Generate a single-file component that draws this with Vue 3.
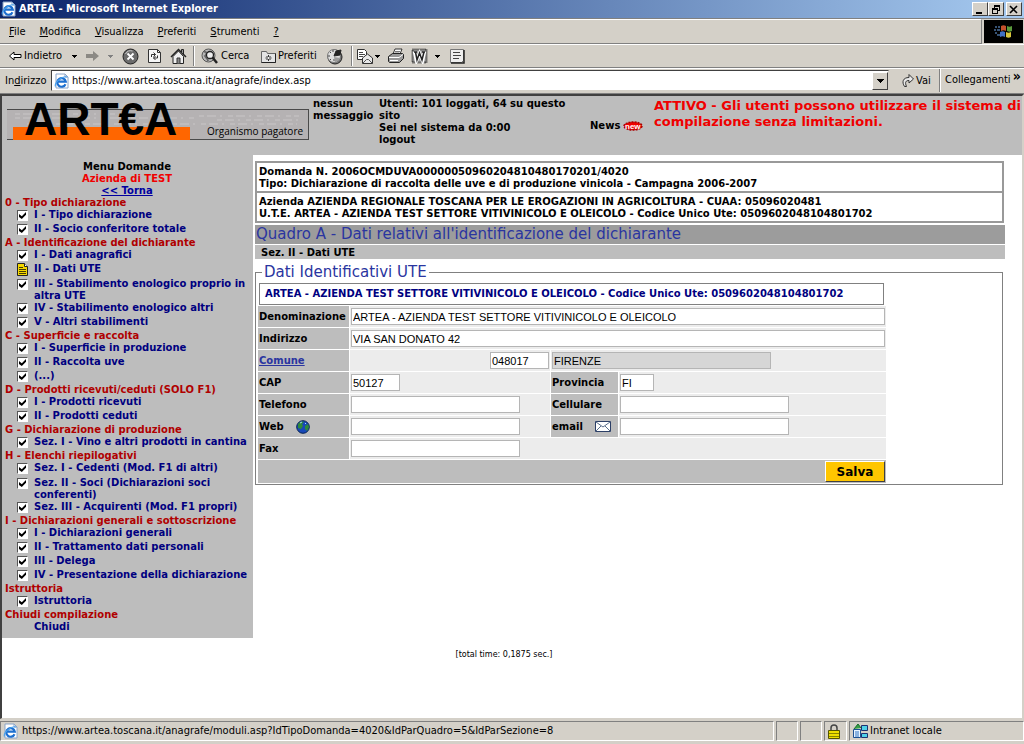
<script setup>
import { reactive } from 'vue'

const menus = [
  { key: 'F', rest: 'ile' },
  { key: 'M', rest: 'odifica' },
  { key: 'V', rest: 'isualizza' },
  { key: 'P', rest: 'referiti' },
  { key: 'S', rest: 'trumenti' },
  { key: '?', rest: '' }
]

const sections = reactive([
  { title: '0 - Tipo dichiarazione', items: [
    { text: 'I - Tipo dichiarazione', done: true },
    { text: 'II - Socio conferitore totale', done: true }
  ] },
  { title: 'A - Identificazione del dichiarante', items: [
    { text: 'I - Dati anagrafici', done: true },
    { text: 'II - Dati UTE', current: true },
    { text: 'III - Stabilimento enologico proprio in', more: 'altra UTE', done: true },
    { text: 'IV - Stabilimento enologico altri', done: true },
    { text: 'V - Altri stabilimenti', done: true }
  ] },
  { title: 'C - Superficie e raccolta', items: [
    { text: 'I - Superficie in produzione', done: true },
    { text: 'II - Raccolta uve', done: true },
    { text: '(...)', done: true }
  ] },
  { title: 'D - Prodotti ricevuti/ceduti (SOLO F1)', items: [
    { text: 'I - Prodotti ricevuti', done: true },
    { text: 'II - Prodotti ceduti', done: true }
  ] },
  { title: 'G - Dichiarazione di produzione', items: [
    { text: 'Sez. I - Vino e altri prodotti in cantina', done: true }
  ] },
  { title: 'H - Elenchi riepilogativi', items: [
    { text: 'Sez. I - Cedenti (Mod. F1 di altri)', done: true },
    { text: 'Sez. II - Soci (Dichiarazioni soci', more: 'conferenti)', done: true },
    { text: 'Sez. III - Acquirenti (Mod. F1 propri)', done: true }
  ] },
  { title: 'I - Dichiarazioni generali e sottoscrizione', items: [
    { text: 'I - Dichiarazioni generali', done: true },
    { text: 'II - Trattamento dati personali', done: true },
    { text: 'III - Delega', done: true },
    { text: 'IV - Presentazione della dichiarazione', done: true }
  ] },
  { title: 'Istruttoria', items: [{ text: 'Istruttoria', done: true }] },
  { title: 'Chiudi compilazione', items: [{ text: 'Chiudi', link: true }] }
])

const form = reactive({
  url: 'https://www.artea.toscana.it/anagrafe/index.asp',
  denominazione: 'ARTEA - AZIENDA TEST SETTORE VITIVINICOLO E OLEICOLO',
  indirizzo: 'VIA SAN DONATO 42',
  codice: '048017',
  comune: 'FIRENZE',
  cap: '50127',
  provincia: 'FI',
  telefono: '',
  cellulare: '',
  web: '',
  email: '',
  fax: ''
})
</script>

<template>
  <div class="window">
    <svg class="defs" width="0" height="0" aria-hidden="true">
      <symbol id="ie" viewBox="0 0 16 16">
        <path d="M2 1h9l3 3v11H2z" fill="#fff" stroke="#8aa4c8" />
        <path d="M11 1v3h3" fill="none" stroke="#8aa4c8" />
        <path d="M11.500 11.200A4.300 4.300 0 1 1 11.800 8.600H4" fill="none" stroke="#1c6fd0" stroke-width="2.200" />
        <path d="M1.500 13.500C0 10 8 2.500 13 4" fill="none" stroke="#4aa3ee" stroke-width="1.200" />
      </symbol>
      <symbol id="caret" viewBox="0 0 5 3"><path d="M0 0h5v1H4v1H3v1H2V2H1V1H0z" fill="currentColor" /></symbol>
    </svg>

    <header class="titlebar">
      <svg class="i16"><use href="#ie" /></svg>
      <span class="title">ARTEA - Microsoft Internet Explorer</span>
      <button class="winbtn" aria-label="Riduci a icona"><svg width="10" height="9"><path d="M1 7h6v2H1z" /></svg></button>
      <button class="winbtn" aria-label="Ripristina"><svg width="10" height="9"><path d="M3 0h6v6H7V5h1V2H4v1H3zM1 3h6v6H1zM2 5v3h4V5z" fill-rule="evenodd" /></svg></button>
      <button class="winbtn close" aria-label="Chiudi finestra"><svg width="10" height="9"><path d="M1 1l7 7M8 1L1 8" stroke="#000" stroke-width="1.600" /></svg></button>
    </header>

    <div class="menurow">
      <nav class="menubar">
        <button v-for="m in menus" :key="m.key"><u>{{ m.key }}</u>{{ m.rest }}</button>
      </nav>
      <div class="throbber">
        <svg width="20" height="18" viewBox="0 0 20 18">
          <path d="M7 3c2-1 3-1 5 0v5c-2-1-3-1-5 0z" fill="#c4502c" />
          <path d="M13 3c2 1 3 1 5 0v5c-2 1-3 1-5 0z" fill="#5b9a3c" />
          <path d="M6 9c2-1 3-1 5 0v5c-2-1-3-1-5 0z" fill="#3f6fc4" />
          <path d="M12 9c2 1 3 1 5 0v5c-2 1-3 1-5 0z" fill="#d8c53c" />
          <path d="M1 4h2M4 4h2M0 7h2M3 7h3M1 10h2M3 12h3" stroke="#4a6f9c" stroke-width="1.500" />
        </svg>
      </div>
    </div>

    <div class="toolbar">
      <button class="tool"><svg width="14" height="10"><path d="M13 3.500H6V1L1.500 5 6 9V6.500h7z" fill="#fff" stroke="#000" /></svg><span>Indietro</span></button>
      <button class="tool" aria-label="Cronologia indietro"><svg width="5" height="3"><use href="#caret" /></svg></button>
      <button class="tool" aria-label="Avanti"><svg width="14" height="10"><path d="M0 3h7V0l6 5-6 5V7H0z" fill="#8b8984" /></svg></button>
      <button class="tool off" aria-label="Cronologia avanti"><svg width="5" height="3"><use href="#caret" /></svg></button>
      <button class="tool" aria-label="Termina">
        <svg width="17" height="17"><circle cx="8.500" cy="8.500" r="7.500" fill="#6b6b6b" stroke="#222" /><path d="M3.500 6a6 6 0 0 1 7-3" stroke="#ccc" fill="none" /><path d="M5.500 5.500l6 6M11.500 5.500l-6 6" stroke="#fff" stroke-width="1.800" /></svg>
      </button>
      <button class="tool" aria-label="Aggiorna">
        <svg width="15" height="16"><path d="M1.500 1.500h9l3 3v10h-12z" fill="#f6f6f6" stroke="#333" /><path d="M10.500 1.500v3h3" stroke="#333" fill="none" /><path d="M4.500 9V6.500h4M6.500 4.500l2 2-2 2M10.500 7.500V10h-4M8.500 8l-2 2 2 2" stroke="#333" fill="none" /></svg>
      </button>
      <button class="tool" aria-label="Pagina iniziale">
        <svg width="17" height="17"><path d="M3 8.500v7h10.500v-7L8.500 3z" fill="#eee" stroke="#222" /><path d="M1 9l7.500-7.500L16 9" fill="none" stroke="#222" stroke-width="1.500" /><path d="M11.500 4V1.500h2V6" fill="#999" stroke="#222" /><path d="M7 15.500V10h3v5.500" fill="#888" stroke="#333" /></svg>
      </button>
      <i class="sep"></i>
      <button class="tool">
        <svg width="18" height="17"><circle cx="7.500" cy="7.500" r="6.500" fill="#b8b8b8" stroke="#555" /><path d="M3 4c3-1 3 3 1 4 2 3 3 3 3 5" fill="none" stroke="#666" stroke-width="1.800" /><circle cx="9" cy="7" r="3.500" fill="#eee" stroke="#222" stroke-width="1.300" /><path d="M11.500 9.500l4.500 5.500" stroke="#222" stroke-width="2.500" /></svg><span>Cerca</span>
      </button>
      <button class="tool">
        <svg width="16" height="15"><path d="M1.500 2.500h5l1 2h8v9h-14z" fill="#e4e4e4" stroke="#666" /><path d="M15.500 4.500v9h-14" fill="none" stroke="#222" /><path d="M8.500 6v6M5.500 9h6M6.500 7l4 4M10.500 7l-4 4" stroke="#333" /><circle cx="8.500" cy="9" r="1" fill="#fff" /></svg><span>Preferiti</span>
      </button>
      <button class="tool" aria-label="Cronologia">
        <svg width="18" height="17"><circle cx="9" cy="9" r="7" fill="#777" stroke="#222" /><circle cx="8" cy="8" r="6.500" fill="#ddd" stroke="#777" /><path d="M8 8l2-5 5-1-1 5z" fill="#222" stroke="#222" /><path d="M2 8h2M8 13v-2M4 4l1 1M4 12l1-1M12 12l-1-1M7 2v2" stroke="#444" /><path d="M8 9l6 1a6 6 0 0 1-5 4z" fill="#999" /></svg>
      </button>
      <i class="sep"></i>
      <button class="tool" aria-label="Posta">
        <svg width="17" height="17"><path d="M1.500 1.500h7l2 2v8h-9z" fill="#fff" stroke="#333" /><path d="M3 4.500h4M3 6.500h6M3 8.500h4" stroke="#444" /><path d="M6.500 10l5-4 5 4v5.500h-10z" fill="#e8e8e8" stroke="#333" /><path d="M6.500 15.500l4-4h2l4 4" fill="none" stroke="#555" /></svg><svg width="5" height="3"><use href="#caret" /></svg>
      </button>
      <button class="tool" aria-label="Stampa">
        <svg width="18" height="16"><path d="M6 6l2-5h7l-2 5z" fill="#fff" stroke="#333" /><path d="M8 3.500h5M7.500 5h5" stroke="#777" /><path d="M1.500 8.500l4-3h10l1 1v4l-4 4h-10l-1-1z" fill="#999" stroke="#222" /><path d="M2 9.500h10l4-3M3 12.500h8" fill="none" stroke="#fff" /></svg>
      </button>
      <button class="tool" aria-label="Modifica con Word">
        <svg width="17" height="16"><path d="M1.500 1.500h14v13h-14z" fill="#a8a8a8" stroke="#222" stroke-width="2" stroke-dasharray="1 1" /><path d="M3.500 3.500l2 9 3-7 3 7 2-9" fill="none" stroke="#fff" stroke-width="3.500" /><path d="M3 4h3M4.500 4l1.500 8L8.500 5l2.500 7L13 4M11 4h3" fill="none" stroke="#222" stroke-width="1.500" /></svg>
      </button>
      <button class="tool" aria-label="Altri editor"><svg width="5" height="3"><use href="#caret" /></svg></button>
      <button class="tool" aria-label="Discussione">
        <svg width="16" height="16"><path d="M1.500 1.500h13v11l-2 2h-11z" fill="#eee" stroke="#777" /><path d="M15 2v13H2" fill="none" stroke="#222" stroke-width="1.500" /><path d="M4 4.500h7M4 7.500h8M4 10.500h6" stroke="#444" /></svg>
      </button>
    </div>

    <div class="addressbar">
      <label for="url">In<u>d</u>irizzo</label>
      <div class="urlbox">
        <svg class="i16"><use href="#ie" /></svg>
        <input id="url" v-model="form.url" type="text">
        <button class="drop" aria-label="Mostra indirizzi"><svg width="7" height="4"><path d="M0 0h7v1H6v1H5v1H4v1H3V3H2V2H1V1H0z" /></svg></button>
      </div>
      <button class="go">
        <svg width="14" height="15"><path d="M3.500 13.500C.5 9 2 4.500 8 4.500V1.500L12.500 6 8 10V7.500C5 7.500 3.500 9 5.500 13.500z" fill="#e8e8e8" stroke="#333" /></svg>
        <span>Vai</span>
      </button>
      <button class="links"><span>Collegamenti</span><b>»</b></button>
    </div>

    <main class="page">
      <div class="banner">
        <svg class="logo" width="303" height="46" viewBox="0 0 303 46" role="img" aria-label="ARTEA Organismo pagatore">
          <rect x="0" y="12" width="302" height="30" fill="#b5b2b3" />
          <path d="M8 20h180M20 26h270M192 18h100M8 16h100M210 22h82" stroke="#bfbcbd" stroke-width="2" stroke-dasharray="5 3 9 4 2 6" />
          <rect x="6" y="29" width="177" height="13" fill="#ff6600" />
          <path d="M0 11.500h302M0 41.500h6M183 41.500h119M301.500 11v31" stroke="#4a4a4a" fill="none" />
          <text class="logo-name" x="17" y="37">ART€A</text>
          <text class="logo-sub" x="200" y="37">Organismo pagatore</text>
        </svg>
        <p class="msg">nessun<br>messaggio</p>
        <p class="users">Utenti: 101 loggati, 64 su questo<br>sito<br>Sei nel sistema da 0:00<br>logout</p>
        <p class="news">News
          <svg width="20" height="10" viewBox="0 0 20 10"><ellipse cx="10" cy="5" rx="9" ry="4" fill="#e00" stroke="#a00" stroke-width="1.500" stroke-dasharray="2 1" /><text x="2" y="8">new</text></svg>
        </p>
        <p class="status">ATTIVO - Gli utenti possono utilizzare il sistema di<br>compilazione senza limitazioni.</p>
      </div>

      <div class="columns">
        <nav class="side">
          <div class="side-head">
            <div>Menu Domande</div>
            <div class="firm">Azienda di TEST</div>
            <a href="#torna">&lt;&lt; Torna</a>
          </div>
          <section v-for="(s, si) in sections" :key="s.title">
            <h2>{{ s.title }}</h2>
            <div v-for="(it, ii) in s.items" :key="it.text" class="entry" :class="{ tall: it.more }">
              <template v-if="it.current || it.link">
                <svg v-if="it.current" width="11" height="13"><path d="M.5.500h7l3 3v9H.5z" fill="#f5d800" stroke="#222" /><path d="M7.500.500v3h3" stroke="#222" fill="#fff" /><path d="M2 4.500h4M2 6.500h7M2 8.500h7M2 10.500h7" stroke="#443c00" /></svg>
                <i v-else></i>
                <a :href="'#s' + si">{{ it.text }}</a>
              </template>
              <template v-else>
                <input :id="'c' + si + ii" v-model="it.done" type="checkbox">
                <label :for="'c' + si + ii">{{ it.text }}<template v-if="it.more"><br>{{ it.more }}</template></label>
              </template>
            </div>
          </section>
        </nav>

        <div class="content">
          <div class="info">
            <p>Domanda N. 2006OCMDUVA00000050960204810480170201/4020<br>Tipo: Dichiarazione di raccolta delle uve e di produzione vinicola - Campagna 2006-2007</p>
            <p>Azienda AZIENDA REGIONALE TOSCANA PER LE EROGAZIONI IN AGRICOLTURA - CUAA: 05096020481<br>U.T.E. ARTEA - AZIENDA TEST SETTORE VITIVINICOLO E OLEICOLO - Codice Unico Ute: 0509602048104801702</p>
          </div>
          <h1>Quadro A - Dati relativi all'identificazione del dichiarante</h1>
          <h3>Sez. II - Dati UTE</h3>

          <fieldset>
            <legend>Dati Identificativi UTE</legend>
            <div class="ute">ARTEA - AZIENDA TEST SETTORE VITIVINICOLO E OLEICOLO - Codice Unico Ute: 0509602048104801702</div>
            <form @submit.prevent>
              <table>
                <colgroup><col class="c1"><col class="c2"><col class="c3"><col></colgroup>
                <tbody>
                  <tr><th><label for="den">Denominazione</label></th><td colspan="3"><input id="den" v-model="form.denominazione" class="full" type="text"></td></tr>
                  <tr><th><label for="ind">Indirizzo</label></th><td colspan="3"><input id="ind" v-model="form.indirizzo" class="full" type="text"></td></tr>
                  <tr>
                    <th><a href="#comune">Comune</a></th>
                    <td class="right"><input v-model="form.codice" class="w59" type="text" aria-label="Codice comune"></td>
                    <td colspan="2"><input v-model="form.comune" class="w219" type="text" readonly aria-label="Comune"></td>
                  </tr>
                  <tr>
                    <th><label for="cap">CAP</label></th><td><input id="cap" v-model="form.cap" class="w49" type="text"></td>
                    <th><label for="prov">Provincia</label></th><td><input id="prov" v-model="form.provincia" class="w34" type="text"></td>
                  </tr>
                  <tr>
                    <th><label for="tel">Telefono</label></th><td><input id="tel" v-model="form.telefono" class="w169" type="text"></td>
                    <th><label for="cel">Cellulare</label></th><td><input id="cel" v-model="form.cellulare" class="w169" type="text"></td>
                  </tr>
                  <tr>
                    <th><div class="withicon"><label for="web">Web</label>
                      <svg width="14" height="14"><circle cx="7" cy="7" r="6.300" fill="#1748b8" stroke="#0a2450" /><path d="M2 4c2-3 5-3 6-2l-2 2 1 2-2 3-3-1zM9 6l3-2 1 3-2 4-2-2z" fill="#2f8a3a" /><path d="M4 3l2-1M9 3l1 1" stroke="#9fd4ff" /></svg></div></th>
                    <td><input id="web" v-model="form.web" class="w169" type="text"></td>
                    <th><div class="withicon"><label for="mail">email</label>
                      <svg width="16" height="11"><path d="M.5.500h15v10H.5z" fill="#fff" stroke="#2c3f66" /><path d="M1 1l7 5 7-5M1 10l5-5M15 10l-5-5" fill="none" stroke="#5a6f8c" /></svg></div></th>
                    <td><input id="mail" v-model="form.email" class="w169" type="text"></td>
                  </tr>
                  <tr><th><label for="fax">Fax</label></th><td colspan="3"><input id="fax" v-model="form.fax" class="w169" type="text"></td></tr>
                  <tr><td class="save" colspan="4"><button type="submit">Salva</button></td></tr>
                </tbody>
              </table>
            </form>
          </fieldset>
        </div>
      </div>
      <p class="time">[total time: 0,1875 sec.]</p>
    </main>

    <footer class="statusbar">
      <div class="pane grow"><svg class="i16"><use href="#ie" /></svg><span>https://www.artea.toscana.it/anagrafe/moduli.asp?IdTipoDomanda=4020&amp;IdParQuadro=5&amp;IdParSezione=8</span></div>
      <div class="pane"></div>
      <div class="pane"></div>
      <div class="pane lock">
        <svg width="12" height="15"><path d="M3 7V4c0-4 6-4 6 0v3" fill="none" stroke="#444" stroke-width="1.500" /><path d="M.5 6.500h11v8H.5z" fill="#f0e000" stroke="#555500" /><path d="M1 9.500h10M1 12.500h10" stroke="#8a8400" /></svg>
      </div>
      <div class="pane zone">
        <svg width="16" height="16"><path d="M1.500 6.500h7v8h-7z" fill="#e8f4ff" stroke="#1a4f90" /><path d="M2 6L6 1l3 4" fill="#36a046" stroke="#176a2a" /><path d="M9.500 2.500h6v5h-6zM9.500 10.500h6v4h-6z" fill="#4fd0e8" stroke="#1c2f70" /><path d="M3 9h4M3 11h4M3 13h4" stroke="#2a70c0" /></svg>
        <span>Intranet locale</span>
      </div>
    </footer>
  </div>
</template>

<style>
html, body { margin: 0; background: #d4d0c8; }
</style>

<style scoped>
* { box-sizing: border-box; }
.window {
  min-height: 100vh;
  display: flex;
  flex-direction: column;
  background: #d4d0c8;
  color: #000;
  font: 11px/14px "DejaVu Sans Condensed", "DejaVu Sans", sans-serif;
  white-space: nowrap;
}
.defs { position: absolute; }
svg { flex: none; }
p, h1, h2, h3 { margin: 0; }
button { font: inherit; color: inherit; background: none; border: 0; padding: 0; }
.i16 { width: 16px; height: 16px; }

.titlebar {
  height: 18px;
  display: flex;
  align-items: center;
  padding: 0 2px 0 1px;
  background: linear-gradient(90deg, #0a246a, #a6caf0);
  color: #fff;
  font-weight: bold;
}
.title { flex: 1; padding-left: 2px; }
.winbtn {
  width: 16px;
  height: 14px;
  display: flex;
  align-items: center;
  justify-content: center;
  color: #000;
  background: #d4d0c8;
  border: 1px solid;
  border-color: #fff #404040 #404040 #fff;
}
.close { margin-left: 2px; }

.menurow { height: 26px; display: flex; border-top: 1px solid #808080; }
.menubar {
  flex: 1;
  display: flex;
  align-items: center;
  gap: 14px;
  padding: 0 9px;
  border-top: 1px solid #fff;
  border-bottom: 1px solid #808080;
  border-right: 1px solid #808080;
}
.throbber { width: 39px; margin: 1px 1px 1px 2px; background: #000; display: flex; align-items: center; justify-content: center; }

.toolbar {
  height: 24px;
  display: grid;
  grid-template-columns: 64px 14px 22px 14px 25px 23px 23px 8px 59px 66px 25px 5px 31px 24px 24px 14px 20px;
  align-items: center;
  padding-left: 8px;
  border-top: 1px solid #fff;
  border-bottom: 1px solid #808080;
}
.tool { display: flex; align-items: center; gap: 2px; }
.off { color: #808080; }
.sep { width: 2px; height: 20px; border-left: 1px solid #808080; border-right: 1px solid #fff; }

.addressbar { height: 26px; display: flex; align-items: center; padding: 1px 2px 2px 5px; border-top: 1px solid #fff; border-bottom: 1px solid #808080; }
.addressbar > label { width: 46px; }
.urlbox { flex: 1; display: flex; align-items: center; height: 21px; padding-left: 2px; background: #fff; border: 1px solid; border-color: #404040 #d4d0c8 #d4d0c8 #404040; }
.urlbox input { flex: 1; min-width: 0; border: 0; outline: 0; padding: 0 0 0 2px; font: inherit; background: #fff; }
.drop { width: 16px; height: 18px; display: flex; align-items: center; justify-content: center; background: #d4d0c8; border: 1px solid; border-color: #fff #404040 #404040 #fff; }
.go { width: 51px; height: 23px; display: flex; align-items: center; gap: 1px; padding-left: 12px; border-right: 1px solid #808080; }
.links { width: 82px; height: 23px; display: flex; justify-content: space-between; padding: 4px 1px 0 4px; border-left: 1px solid #fff; }
.links b { font-size: 14px; line-height: 7px; }

.page {
  flex: 1;
  background: #fff;
  border: solid;
  border-width: 2px 2px 1px;
  border-color: #404040 #d4d0c8 #d4d0c8 #404040;
  font: bold 10px/12px "DejaVu Sans", sans-serif;
}
.banner { display: flex; align-items: flex-start; height: 59px; padding: 2px 0 0 5px; background: #bdbdbd; }
.logo { overflow: visible; }
.logo-name { font: bold 46px "Liberation Sans", Arial, sans-serif; }
.logo-sub { font: 10px "Open Sans", sans-serif; }
.msg { width: 66px; margin-left: 3px; }
.users { width: 211px; }
.news { width: 64px; padding-top: 22px; display: flex; align-items: center; gap: 3px; }
.news text { font: bold 8px "Liberation Sans", sans-serif; fill: #fff; }
.status { color: #f00000; font-size: 13px; line-height: 16px; }

.columns { display: flex; align-items: flex-start; }
.side { width: 251px; padding: 6px 0 3px 3px; background: #bdbdbd; color: #000080; }
.side-head { text-align: center; height: 36px; padding-right: 4px; color: #000; }
.firm { color: #f00000; }
.side-head a { color: #0000a0; display: block; }
.side h2 { font: inherit; color: #b00000; }
.entry { display: flex; align-items: flex-start; min-height: 14px; }
.tall { padding-top: 1px; }
.entry a { color: inherit; text-decoration: none; }
.entry svg, .entry i { width: 11px; margin: 0 6px 0 12px; }
.entry input {
  appearance: none;
  width: 11px;
  height: 11px;
  margin: 1px 6px 0 12px;
  background: #fff;
  border: 1px solid;
  border-color: #555 #fff #fff #555;
}
.entry input:checked::before {
  content: "";
  display: block;
  width: 7px;
  height: 7px;
  margin: 1px;
  background: #000;
  clip-path: polygon(0 28%, 40% 62%, 100% 0, 100% 40%, 40% 100%, 0 70%);
}

.content { flex: 1; min-width: 0; padding: 6px 17px 0 2px; }
.info { margin-right: 1px; border: 2px solid #999; }
.info p { padding: 3px 2px 1px; height: 28px; }
.info p + p { border-top: 2px solid #999; height: 30px; }
h1 { margin-top: 2px; padding-left: 1px; background: #9c9c9c; color: #2a35a0; font: 15px/19px "DejaVu Sans", sans-serif; }
h3 { margin-top: 1px; padding: 2px 6px 0; background: #bdbdbd; font: inherit; }
fieldset { margin: 5px 2px 0 0; padding: 0 2px; border: 1px solid #808080; min-width: 0; }
legend { margin-left: 4px; padding: 0 2px; color: #2a35a0; font: 15px/17px "DejaVu Sans", sans-serif; }
.ute { width: 625px; margin: 2px 0 0 1px; padding: 4px 5px; border: 1px solid #808080; color: #000080; }
table { width: 630px; table-layout: fixed; border-spacing: 1px; margin-left: -1px; }
.c1 { width: 91px; }
.c2 { width: 200px; }
.c3 { width: 67px; }
th, td { height: 21px; padding: 0 1px; text-align: left; background: #ececec; }
th { background: #bdbdbd; }
th a { color: #2a35a0; }
.right { text-align: right; }
.withicon { display: flex; align-items: center; gap: 12px; }
table input {
  display: inline-block;
  vertical-align: middle;
  height: 17px;
  padding: 0 1px;
  background: #fff;
  border: 1px solid #b5b5b5;
  font: 11px "Liberation Sans", Arial, sans-serif;
}
table input[readonly] { background: #d6d6d6; }
.full { width: 100%; }
.w34 { width: 34px; }
.w49 { width: 49px; }
.w59 { width: 59px; }
.w169 { width: 169px; }
.w219 { width: 219px; }
.save { height: 23px; background: #bdbdbd; text-align: right; }
.save button { width: 60px; height: 21px; vertical-align: middle; background: #ffc600; border: 1px solid; border-color: #fff #404040 #404040 #fff; font-size: 12px; font-weight: bold; }
.time { margin-top: 11px; padding-right: 16px; text-align: center; font: 8px/12px "DejaVu Sans", sans-serif; }

.statusbar { height: 25px; display: flex; gap: 2px; padding: 2px 0 3px; }
.pane { width: 22px; display: flex; align-items: center; gap: 3px; padding-left: 2px; border: 1px solid; border-color: #808080 #fff #fff #808080; }
.grow { flex: 1; }
.lock { width: 23px; padding-left: 3px; }
.zone { width: 175px; gap: 2px; }
</style>
